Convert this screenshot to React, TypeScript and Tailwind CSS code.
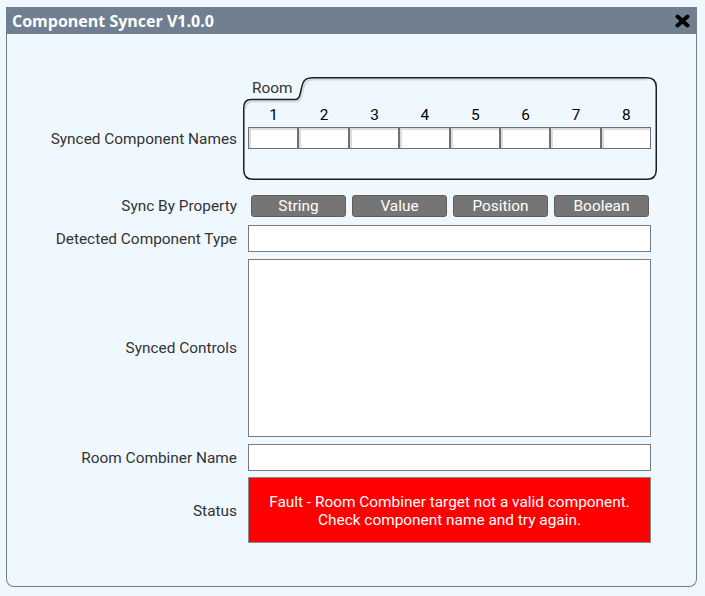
import React from "react";

const labelCls =
  "w-[230px] shrink-0 text-right text-[15.4px] leading-[20px] text-[#333]";

function RoomBox() {
  return (
    <input
      className="w-[50.4px] h-[22px] bg-white border border-[#707070] shadow-[inset_2px_2px_0_#dcdcdc] outline-none"
      readOnly
    />
  );
}

function Btn({ children }: { children: React.ReactNode }) {
  return (
    <button className="w-[95px] h-[22px] rounded-[3px] bg-[#757575] border border-[#5e5e5e] text-white text-[15.4px] leading-[20px] flex items-center justify-center">
      {children}
    </button>
  );
}

export default function App() {
  const nums = [1, 2, 3, 4, 5, 6, 7, 8];
  return (
    <div
      className="w-[705px] h-[596px] bg-[#f0f8ff] pt-[7px] pl-[6px] overflow-hidden"
      style={{ fontFamily: "Roboto, 'Liberation Sans', sans-serif" }}
    >
      <div className="w-[691px] h-[580px] border border-t-0 border-[#708090] rounded-b-[8px] bg-[#f0f8ff] flex flex-col">
        {/* Title bar */}
        <div className="h-[27px] -mx-px bg-[#708090] flex items-center justify-between pl-[6px] pr-[7px] shrink-0">
          <span
            className="text-white font-bold text-[16px] leading-[20px]"
            style={{ fontFamily: "'Open Sans', 'DejaVu Sans', sans-serif" }}
          >
            Component Syncer V1.0.0
          </span>
          <svg width="15" height="14" viewBox="0 0 15 14">
            <path
              d="M2.5 2.5 L12.5 11.5 M12.5 2.5 L2.5 11.5"
              stroke="#000"
              strokeWidth="4"
              strokeLinecap="round"
            />
          </svg>
        </div>

        {/* Body */}
        <div className="flex flex-col pt-[43px]">
          {/* Synced Component Names */}
          <div className="flex items-start">
            <div className={labelCls + " mt-[52px]"}>Synced Component Names</div>
            <div className="ml-[6px] relative w-[414px] h-[103px]">
              <svg
                className="absolute inset-0"
                width="414"
                height="103"
                viewBox="0 0 414 103"
              >
                <path
                  d="M2.5 32 Q2.5 24.5 9 24.5 L53 24.5 C58 24.5 58.5 19 60 13 C61.5 6 63.5 2.5 71 2.5 L404 2.5"
                  fill="none"
                  stroke="#d3d9df"
                  strokeWidth="2"
                />
                <path
                  d="M0.75 31 Q0.75 22.5 8 22.5 L52 22.5 C57 22.5 57 17 58.5 11 C60 4 62 0.75 70 0.75 L404 0.75 Q413.25 0.75 413.25 10 L413.25 93 Q413.25 102.25 404 102.25 L10 102.25 Q0.75 102.25 0.75 93 Z"
                  fill="none"
                  stroke="#1e1e1e"
                  strokeWidth="1.5"
                />
              </svg>
              <div className="relative flex flex-col pl-[5px]">
                <div className="pl-[4px] pt-[2px] text-[15.4px] leading-[18px] text-[#333]">
                  Room
                </div>
                <div className="flex mt-[9px]">
                  {nums.map((n) => (
                    <div
                      key={n}
                      className="w-[50.4px] text-center text-[15.4px] leading-[18px] text-black pl-[1px]"
                    >
                      {n}
                    </div>
                  ))}
                </div>
                <div className="flex mt-[3px]">
                  {nums.map((n) => (
                    <RoomBox key={n} />
                  ))}
                </div>
              </div>
            </div>
          </div>

          {/* Sync By Property */}
          <div className="flex items-center mt-[15px]">
            <div className={labelCls}>Sync By Property</div>
            <div className="ml-[11px] w-[403px] flex gap-[6px] pl-[3px]">
              <Btn>String</Btn>
              <Btn>Value</Btn>
              <Btn>Position</Btn>
              <Btn>Boolean</Btn>
            </div>
          </div>

          {/* Detected Component Type */}
          <div className="flex items-center mt-[8px]">
            <div className={labelCls}>Detected Component Type</div>
            <input
              readOnly
              className="ml-[11px] w-[403px] h-[27px] bg-white border border-[#7a7a7a] outline-none"
            />
          </div>

          {/* Synced Controls */}
          <div className="flex items-center mt-[7px]">
            <div className={labelCls}>Synced Controls</div>
            <textarea
              readOnly
              className="ml-[11px] w-[403px] h-[178px] bg-white border border-[#7a7a7a] outline-none resize-none"
            />
          </div>

          {/* Room Combiner Name */}
          <div className="flex items-center mt-[7px]">
            <div className={labelCls}>Room Combiner Name</div>
            <input
              readOnly
              className="ml-[11px] w-[403px] h-[27px] bg-white border border-[#7a7a7a] outline-none"
            />
          </div>

          {/* Status */}
          <div className="flex items-center mt-[6px]">
            <div className={labelCls + " pt-[2px]"}>Status</div>
            <div className="ml-[11px] w-[403px] h-[66px] bg-[#ff0000] border border-[#8c8c8c] flex flex-col items-center justify-center text-white text-[15.4px] leading-[18px] text-center pt-[2px]">
              <div>Fault - Room Combiner target not a valid component.</div>
              <div>Check component name and try again.</div>
            </div>
          </div>
        </div>
      </div>
    </div>
  );
}
